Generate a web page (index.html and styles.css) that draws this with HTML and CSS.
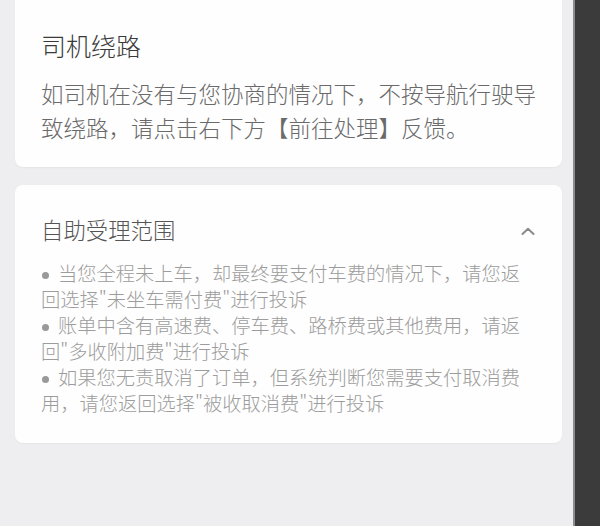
FILE: index.html
```html
<!DOCTYPE html>
<html lang="zh-CN">
<head>
<meta charset="utf-8">
<title>自助受理</title>
<link rel="stylesheet" href="styles.css">
</head>
<body>
<div class="screen">
  <main class="content">
    <section class="card card-detour">
      <h2 class="card-title">司机绕路</h2>
      <p class="card-desc">如司机在没有与您协商的情况下，不按导航行驶导致绕路，请点击右下方【前往处理】反馈。</p>
    </section>

    <section class="card card-scope">
      <div class="scope-head">
        <h3 class="scope-title">自助受理范围</h3>
        <svg class="chevron" width="14" height="8" viewBox="0 0 14 8" aria-hidden="true">
          <polyline points="1.5,7 7,1.8 12.5,7" fill="none" stroke="#8a8a8a" stroke-width="2" stroke-linecap="round" stroke-linejoin="round"/>
        </svg>
      </div>
      <ul class="scope-list">
        <li>当您全程未上车，却最终要支付车费的情况下，请您返回选择"未坐车需付费"进行投诉</li>
        <li>账单中含有高速费、停车费、路桥费或其他费用，请返回"多收附加费"进行投诉</li>
        <li>如果您无责取消了订单，但系统判断您需要支付取消费用，请您返回选择"被收取消费"进行投诉</li>
      </ul>
    </section>
  </main>
  <aside class="edge"></aside>
</div>
</body>
</html>
```

FILE: styles.css
```css
* {
  box-sizing: border-box;
}

html,
body {
  margin: 0;
  height: 100%;
}

body {
  background: #eeedf0;
  font-family: "Noto Sans CJK SC", "Noto Sans", sans-serif;
  font-weight: 300;
  overflow: hidden;
}

.screen {
  display: flex;
  height: 100%;
}

.content {
  flex: 0 0 573px;
  display: flex;
  flex-direction: column;
  gap: 18px;
  padding: 0 11px 0 15px;
  margin-top: -10px;
}

.edge {
  flex: 1;
  background: #3b3b3b;
  border-left: 2px solid #8c8c8e;
}

.card {
  background: #fefefe;
  border-radius: 8px;
  box-shadow: 0 1px 2px rgba(0, 0, 0, 0.04);
}

/* first card: heading + description */
.card-detour {
  padding: 38px 20px 23px 26px;
}

.card-title {
  margin: 0;
  font-size: 25px;
  line-height: 34px;
  font-weight: 300;
  color: #3a3a3a;
}

.card-desc {
  margin: 14px 0 0;
  font-size: 22.5px;
  line-height: 34px;
  color: #6a6a6a;
}

/* second card: collapsible scope list */
.card-scope {
  padding: 29px 34px 27px 26px;
}

.scope-head {
  display: flex;
  align-items: center;
  justify-content: space-between;
  margin-right: -7px;
}

.scope-title {
  margin: 0;
  font-size: 22.4px;
  line-height: 30px;
  font-weight: 300;
  color: #555555;
}

.chevron {
  display: block;
  margin-top: 3px;
}

.scope-list {
  list-style: none;
  margin: 16px 0 0;
  padding: 0;
  font-size: 19.25px;
  line-height: 26px;
  color: #9c9c9c;
}

.scope-list li::before {
  content: "";
  display: inline-block;
  width: 7px;
  height: 7px;
  border-radius: 50%;
  background: #999999;
  margin: 0 9px 0 1px;
  vertical-align: 2px;
}
```
